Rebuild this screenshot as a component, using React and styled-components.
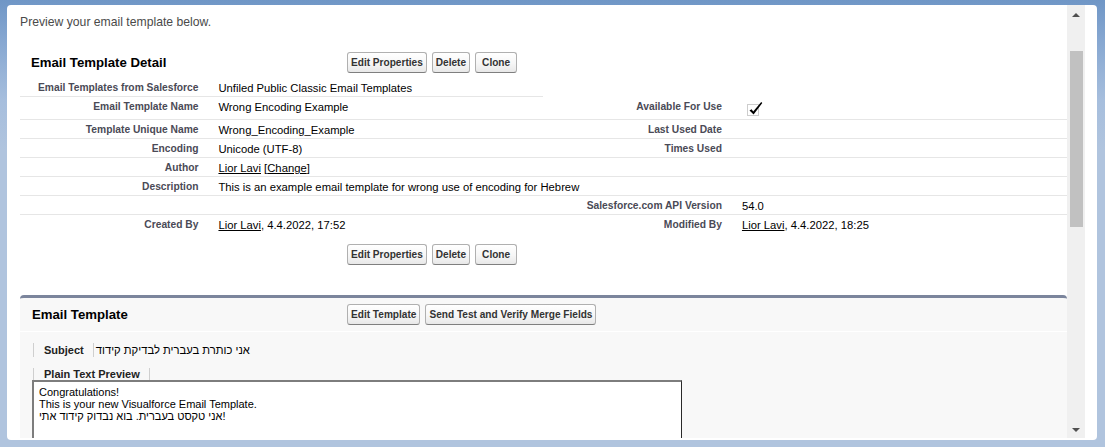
import React from "react";
import styled, { createGlobalStyle } from "styled-components";

const GlobalStyle = createGlobalStyle`
  html, body { margin: 0; padding: 0; }
  body {
    font-family: "Liberation Sans", Arial, sans-serif;
    background: linear-gradient(180deg, #6f96c6 0px, #86a7d1 40px, #a6bedd 100px, #b0c4de 150px, #b0c4de 100%);
    overflow: hidden;
    height: 447px;
  }
`;

const Page = styled.div`
  height: 447px;
  box-sizing: border-box;
  padding: 5px 8px 7px 7px;
  display: flex;
`;

const Panel = styled.div`
  flex: 1;
  background: #fff;
  border-radius: 4px;
  display: flex;
  padding: 0 12px 2px 0;
  overflow: hidden;
`;

const Scroller = styled.div`
  flex: 1;
  min-width: 0;
  overflow: hidden;
  padding-left: 13px;
`;

const Intro = styled.div`
  padding-top: 10px;
  font-size: 12.2px;
  line-height: 14px;
  color: #4a4a4a;
`;

const Block = styled.div`
  margin-top: ${(p) => p.$mt || 0}px;
`;

const BlockHeader = styled.div`
  display: flex;
  align-items: center;
  padding: ${(p) => p.$py}px 0;
  border-bottom: ${(p) => (p.$line ? "1px solid #ffffff" : "none")};
`;

const Title = styled.h2`
  margin: 0;
  width: 327px;
  box-sizing: border-box;
  padding-left: ${(p) => p.$pl}px;
  font-size: 13.2px;
  font-weight: bold;
  color: #000;
`;

const ButtonGroup = styled.div`
  display: flex;
  gap: 5px;
`;

const Button = styled.button`
  font-family: inherit;
  font-size: 10.1px;
  font-weight: bold;
  color: #333;
  height: 21px;
  box-sizing: border-box;
  padding: 0 ${(p) => (p.$px != null ? p.$px : 3)}px;
  border: 1px solid #b0b0b0;
  border-bottom-color: #7f7f7f;
  border-radius: 3px;
  background: linear-gradient(180deg, #ffffff 0%, #f6f6f6 55%, #e8e8e8 100%);
  line-height: 19px;
  white-space: nowrap;
`;

const DetailGrid = styled.div`
  display: grid;
  grid-template-columns: 18% 32% 18% 32%;
`;

const LabelCell = styled.div`
  padding: 4px 10px 2px 2px;
  text-align: right;
  font-size: 10.25px;
  font-weight: bold;
  line-height: 12px;
  color: #4a4a56;
  border-bottom: 1px solid ${(p) => (p.$bare ? "transparent" : "#e6e6e6")};
`;

const DataCell = styled.div`
  padding: 4px 10px 2px 10px;
  font-size: 11.25px;
  line-height: 12px;
  color: #000;
  white-space: nowrap;
  grid-column: span ${(p) => p.$span || 1};
  border-bottom: 1px solid ${(p) => (p.$bare ? "transparent" : "#e6e6e6")};
`;

const UserLink = styled.a`
  color: #000;
  text-decoration: underline;
`;

const Footer = styled.div`
  padding: 10px 0 0 327px;
`;

const Section = styled.div`
  margin-top: 30px;
  background: #f8f8f8;
  border-top: 3px solid #7b859c;
  border-radius: 4px 4px 0 0;
`;

const SectionBody = styled.div`
  padding: 11px 0 0 12px;
`;

const TabRow = styled.div`
  display: flex;
  align-items: center;
  padding-left: 1px;
  height: ${(p) => p.$h}px;
  margin-top: ${(p) => p.$mt || 0}px;
`;

const TabLabel = styled.div`
  padding: 0 9px 0 10px;
  border-left: 1px solid #cfcfcf;
  border-right: 1px solid #cfcfcf;
  font-size: 11px;
  font-weight: bold;
  color: #222;
  line-height: ${(p) => p.$h}px;
  height: ${(p) => p.$h}px;
`;

const TabValue = styled.div`
  padding-left: 2px;
  font-size: 11.25px;
  color: #000;
`;

const PreviewBox = styled.div`
  width: 650px;
  height: 120px;
  box-sizing: border-box;
  background: #fff;
  border-top: 2px solid #7d7d7d;
  border-left: 2px solid #7d7d7d;
  border-right: 1px solid #2a2a2a;
  border-bottom: 1px solid #2a2a2a;
  padding: 4px 6px 0 5px;
  font-size: 11px;
  line-height: 12px;
  color: #000;
`;

const PreviewLine = styled.div`
  white-space: nowrap;
`;

const Scrollbar = styled.div`
  width: 18px;
  background: #f0f0f0;
  display: flex;
  flex-direction: column;
  align-items: center;
`;

const Arrow = styled.svg`
  display: block;
  margin-top: ${(p) => p.$mt || 0}px;
  margin-bottom: ${(p) => p.$mb || 0}px;
`;

const Thumb = styled.div`
  align-self: flex-start;
  margin: 34px 0 0 3px;
  width: 13px;
  height: 176px;
  background: #c1c1c1;
`;

const Spacer = styled.div`
  flex: 1;
`;

const CheckIcon = () => (
  <svg width="21" height="16" viewBox="0 0 21 16" style={{ display: "block" }}>
    <rect x="5.5" y="3.5" width="11" height="11" fill="none" stroke="#9a9a9a" strokeDasharray="1 1" />
    <path d="M7.5 9.5 L9.6 8.2 L11.2 10.6 L19.2 1 L20.3 1.9 L11.6 13.6 Z" fill="#000" />
  </svg>
);

const HeaderButtons = () => (
  <ButtonGroup>
    <Button>Edit Properties</Button>
    <Button>Delete</Button>
    <Button $px={6}>Clone</Button>
  </ButtonGroup>
);

const rows = [
  { l1: "Email Templates from Salesforce", v1: "Unfiled Public Classic Email Templates", rightBare: true },
  { l1: "Email Template Name", v1: "Wrong Encoding Example", l2: "Available For Use", v2: <CheckIcon /> },
  { l1: "Template Unique Name", v1: "Wrong_Encoding_Example", l2: "Last Used Date" },
  { l1: "Encoding", v1: "Unicode (UTF-8)", l2: "Times Used" },
  {
    l1: "Author",
    v1: (
      <>
        <UserLink>Lior Lavi</UserLink> [<UserLink>Change</UserLink>]
      </>
    ),
  },
  { l1: "Description", v1: "This is an example email template for wrong use of encoding for Hebrew", span: 3 },
  { l1: "", v1: "", l2: "Salesforce.com API Version", v2: "54.0" },
  {
    l1: "Created By",
    v1: (
      <>
        <UserLink>Lior Lavi</UserLink>, 4.4.2022, 17:52
      </>
    ),
    l2: "Modified By",
    v2: (
      <>
        <UserLink>Lior Lavi</UserLink>, 4.4.2022, 18:25
      </>
    ),
    last: true,
  },
];

export default function App() {
  return (
    <>
      <GlobalStyle />
      <Page>
        <Panel>
          <Scroller>
            <Intro>Preview your email template below.</Intro>

            <Block $mt={18}>
              <BlockHeader $py={5}>
                <Title $pl={11}>Email Template Detail</Title>
                <HeaderButtons />
              </BlockHeader>
              <DetailGrid>
                {rows.map((r, i) => (
                  <React.Fragment key={i}>
                    <LabelCell $bare={r.last}>{r.l1}</LabelCell>
                    <DataCell $bare={r.last} $span={r.span}>
                      {r.v1}
                    </DataCell>
                    {!r.span && (
                      <>
                        <LabelCell $bare={r.last || r.rightBare}>{r.l2 || ""}</LabelCell>
                        <DataCell $bare={r.last || r.rightBare}>{r.v2 || ""}</DataCell>
                      </>
                    )}
                  </React.Fragment>
                ))}
              </DetailGrid>
              <Footer>
                <HeaderButtons />
              </Footer>
            </Block>

            <Section>
              <BlockHeader $py={6} $line>
                <Title $pl={12}>Email Template</Title>
                <ButtonGroup>
                  <Button>Edit Template</Button>
                  <Button>Send Test and Verify Merge Fields</Button>
                </ButtonGroup>
              </BlockHeader>
              <SectionBody>
                <TabRow $h={14}>
                  <TabLabel $h={14}>Subject</TabLabel>
                  <TabValue>אני כותרת בעברית לבדיקת קידוד</TabValue>
                </TabRow>
                <TabRow $h={12} $mt={11}>
                  <TabLabel $h={12}>Plain Text Preview</TabLabel>
                </TabRow>
                <PreviewBox>
                  <PreviewLine>Congratulations!</PreviewLine>
                  <PreviewLine>This is your new Visualforce Email Template.</PreviewLine>
                  <PreviewLine>אני טקסט בעברית. בוא נבדוק קידוד אתי!</PreviewLine>
                </PreviewBox>
              </SectionBody>
            </Section>
          </Scroller>
          <Scrollbar>
            <Arrow width="8" height="4" viewBox="0 0 8 4" $mt={8}>
              <polygon points="0,4 4,0 8,4" fill="#505050" />
            </Arrow>
            <Thumb />
            <Spacer />
            <Arrow width="8" height="4" viewBox="0 0 8 4" $mb={6}>
              <polygon points="0,0 8,0 4,4" fill="#505050" />
            </Arrow>
          </Scrollbar>
        </Panel>
      </Page>
    </>
  );
}
